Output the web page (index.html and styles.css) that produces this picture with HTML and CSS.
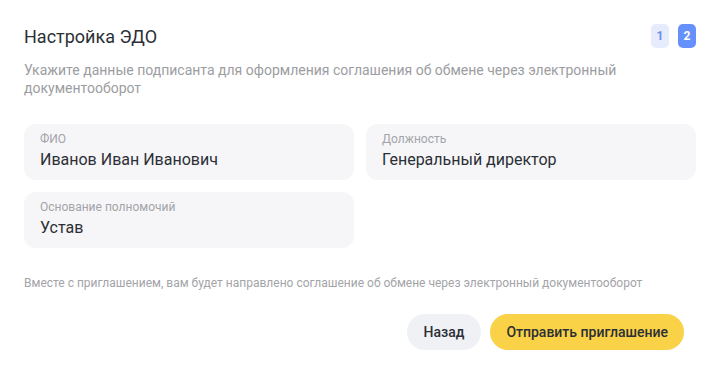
FILE: index.html
```html
<!DOCTYPE html>
<html lang="ru">
<head>
    <meta charset="UTF-8">
    <title>Настройка ЭДО</title>
    <link rel="stylesheet" href="styles.css">
</head>
<body>
    <div class="modal">
        <!-- Header -->
        <div class="modal-head">
            <h2>Настройка ЭДО</h2>
            <div class="steps">
                <span class="step">1</span>
                <span class="step active">2</span>
            </div>
        </div>
        <p class="lead">Укажите данные подписанта для оформления соглашения об обмене через электронный документооборот</p>

        <!-- Fields -->
        <div class="fields">
            <div class="field">
                <span class="field-label">ФИО</span>
                <span class="field-value">Иванов Иван Иванович</span>
            </div>
            <div class="field">
                <span class="field-label">Должность</span>
                <span class="field-value">Генеральный директор</span>
            </div>
            <div class="field">
                <span class="field-label">Основание полномочий</span>
                <span class="field-value">Устав</span>
            </div>
        </div>

        <p class="note">Вместе с приглашением, вам будет направлено соглашение об обмене через электронный документооборот</p>

        <div class="actions">
            <button class="btn btn-back">Назад</button>
            <button class="btn btn-send">Отправить приглашение</button>
        </div>
    </div>
</body>
</html>
```

FILE: styles.css
```css
* {
    margin: 0;
    padding: 0;
    box-sizing: border-box;
}

body {
    font-family: 'Roboto', 'Liberation Sans', sans-serif;
    color: #2b2f36;
    background: #fff;
}

.modal {
    width: 720px;
    padding: 24px 24px 0 24px;
}

/* Header */
.modal-head {
    display: flex;
    justify-content: space-between;
    align-items: flex-start;
}

.modal-head h2 {
    font-size: 18px;
    font-weight: 400;
    line-height: 22px;
    color: #2b2f36;
    margin-top: 2px;
}

.steps {
    display: flex;
    gap: 9px;
}

.step {
    width: 18px;
    height: 24px;
    border-radius: 5px;
    background: #e7ecfd;
    color: #6b8cf0;
    font-size: 12px;
    font-weight: 700;
    display: flex;
    align-items: center;
    justify-content: center;
}

.step.active {
    background: #6690fb;
    color: #fff;
}

.lead {
    margin-top: 13px;
    font-size: 14px;
    line-height: 18px;
    color: #9b9da1;
    width: 620px;
}

/* Fields */
.fields {
    margin-top: 27px;
    display: grid;
    grid-template-columns: 1fr 1fr;
    gap: 12px;
}

.field {
    background: #f6f6f8;
    border-radius: 12px;
    height: 56px;
    padding: 8px 16px 0 16px;
    display: flex;
    flex-direction: column;
}

.field-label {
    font-size: 12px;
    line-height: 14px;
    color: #a3a4a8;
}

.field-value {
    margin-top: 4px;
    font-size: 16px;
    line-height: 20px;
    color: #2b2f36;
}

.note {
    margin-top: 28px;
    font-size: 12px;
    line-height: 14px;
    color: #a3a4a8;
}

/* Buttons */
.actions {
    margin-top: 24px;
    display: flex;
    justify-content: flex-end;
    gap: 9px;
    padding-right: 12px;
}

.btn {
    height: 36px;
    border: none;
    border-radius: 18px;
    padding: 0 16px;
    font-family: inherit;
    font-size: 14px;
    font-weight: 500;
    color: #2b2f36;
    cursor: pointer;
}

.btn-back {
    background: #f0f1f5;
    padding: 0 17px;
}

.btn-send {
    background: #f9d247;
}
```
